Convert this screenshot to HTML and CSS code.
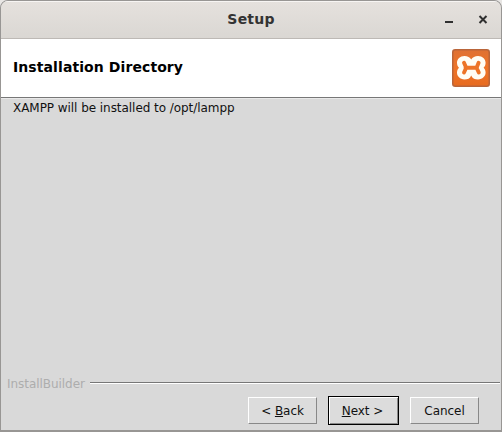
FILE: index.html
```html
<!DOCTYPE html>
<html lang="en">
<head>
<meta charset="utf-8">
<title>Setup</title>
<link rel="stylesheet" href="styles.css">
</head>
<body>
<div class="window">
  <header class="titlebar">
    <span></span>
    <h1 class="title">Setup</h1>
    <svg class="controls" width="44" height="14" viewBox="0 0 44 14"><path d="M1 10h8" stroke="#303030" stroke-width="2"/><path d="M35.5 4l7 7M42.5 4l-7 7" stroke="#303030" stroke-width="2"/></svg>
  </header>
  <section class="banner">
    <h2 class="heading">Installation Directory</h2>
    <svg class="logo" width="38" height="38" viewBox="0 0 38 38">
      <defs><linearGradient id="orange" x2="0" y2="1"><stop stop-color="#df7133"/><stop offset=".5" stop-color="#ee7428"/><stop offset="1" stop-color="#e76b20"/></linearGradient></defs>
      <rect x=".75" y=".75" width="36.5" height="36.5" rx="2.5" fill="url(#orange)" stroke="#b9653a" stroke-width="1.5"/>
      <path d="M12.5 7C15.5 7 18 8.2 19.2 10.5C20.5 8.2 23 7 26 7C30.5 7 33.6 10 33.6 13.8C33.6 16 32.8 17.8 31.6 18.8C32.8 20 33.6 21.6 33.6 23.6C33.6 27.5 30.5 30.4 26 30.4C23 30.4 20.5 29.4 19.2 26.4C18 29.4 15.5 30.4 12.5 30.4C8 30.4 5 27.5 5 23.6C5 21.6 5.8 20 7 18.8C5.8 17.8 5 16 5 13.8C5 10 8 7 12.5 7Z" fill="#fffdf5"/>
      <path d="M12 13.7L14.2 18.7L12 23.5M26.6 13.7L24.6 18.7L26.8 23.5M13.5 18.8H25" fill="none" stroke="#ed7427" stroke-width="3.9" stroke-linecap="round" stroke-linejoin="round"/>
    </svg>
  </section>
  <main class="content">XAMPP will be installed to /opt/lampp</main>
  <footer>
    <div class="brand"><span>InstallBuilder</span><i class="rule"></i></div>
    <div class="actions">
      <button class="btn">&lt; <u>B</u>ack</button>
      <button class="btn primary"><u>N</u>ext &gt;</button>
      <button class="btn">Cancel</button>
    </div>
  </footer>
</div>
</body>
</html>
```
FILE: styles.css
```css
* { box-sizing: border-box; }
body { margin: 0; background: #e8e6e4; font-family: "DejaVu Sans", sans-serif; font-size: 12px; color: #111; }
.window { width: 502px; height: 432px; display: flex; flex-direction: column; background: #d9d9d9; border: 1px solid #989694; border-bottom-width: 2px; border-radius: 8px 8px 0 0; overflow: hidden; }
.titlebar { height: 38px; flex: none; display: grid; grid-template-columns: 1fr auto 1fr; align-items: center; padding: 0 0 2px; background: linear-gradient(#e5e1dd, #dad7d3); border-top: 1px solid #f7f5f3; border-bottom: 1px solid #bdb9b5; }
.title { margin: 0; font-size: 14px; line-height: 18px; letter-spacing: 0.2px; color: #333; }
.controls { justify-self: end; margin-right: 13px; }
.banner { height: 59px; flex: none; display: flex; align-items: center; justify-content: space-between; padding: 0 11px 0 12px; background: #fff; border-bottom: 1px solid #777; }
.heading { margin: 0; padding-bottom: 2px; font-size: 14px; line-height: 18px; letter-spacing: 0.09px; color: #000; }
.content { flex: 1; padding: 1px 12px; line-height: 16px; letter-spacing: -0.05px; border-top: 1px solid #e9e9e9; }
.brand { display: flex; align-items: center; gap: 5px; padding: 0 1px 0 6px; line-height: 16px; color: #adadad; }
.brand span { position: relative; top: 1px; letter-spacing: -0.05px; }
.rule { flex: 1; height: 2px; border-top: 1px solid #777; border-bottom: 1px solid #fff; }
.actions { display: flex; justify-content: flex-end; align-items: center; gap: 11px; height: 39px; padding: 0 22px 0 0; }
.btn { width: 69px; height: 27px; padding: 0; font: inherit; letter-spacing: -0.05px; color: #111; background: #dcdcdc; border: 1px solid; border-color: #fff #888 #888 #fff; border-radius: 0; }
.primary { border-color: #000; width: 71px; height: 29px; padding-right: 2px; box-shadow: inset 1px 1px #fff, inset -1px -1px #888; }
.btn u { text-underline-offset: 1px; }
```
